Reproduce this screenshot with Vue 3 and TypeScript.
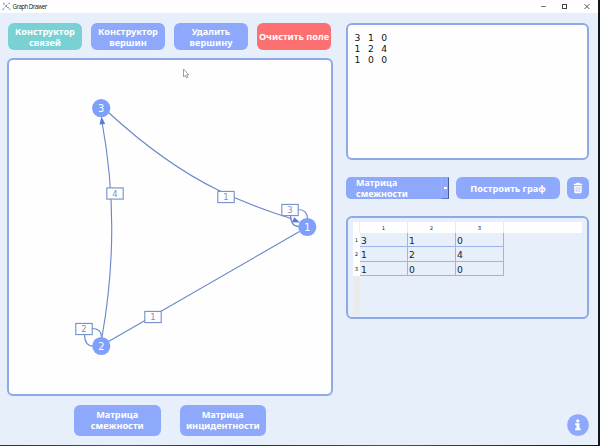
<script setup lang="ts">
import { ref } from 'vue'

interface ToolButton { lines: string[]; tone: string }
interface GraphNode { id: number; x: number; y: number }
interface Weight { value: number; x: number; y: number }

const tools: ToolButton[] = [
  { lines: ['Конструктор', 'связей'], tone: 'teal' },
  { lines: ['Конструктор', 'вершин'], tone: 'blue' },
  { lines: ['Удалить', 'вершину'], tone: 'blue' },
  { lines: ['Очистить поле'], tone: 'red' },
]

const matrix = ref<number[][]>([
  [3, 1, 0],
  [1, 2, 4],
  [1, 0, 0],
])

const nodes: GraphNode[] = [
  { id: 1, x: 307.3, y: 227 },
  { id: 2, x: 101.3, y: 346 },
  { id: 3, x: 101.2, y: 108.2 },
]

const weights: Weight[] = [
  { value: 4, x: 115, y: 193.5 },
  { value: 1, x: 226, y: 197 },
  { value: 3, x: 290, y: 210 },
  { value: 2, x: 84, y: 329 },
  { value: 1, x: 153, y: 317 },
]
</script>

<template>
  <div class="desktop">
    <div class="window">
      <header class="titlebar">
        <svg class="logo" width="9" height="9" viewBox="0 0 9 9">
          <path d="M1 1.5L4 4L7.5 1M4 4L1 7.5M4 4L5.5 5.5L8 7" stroke="#b4bcc6" stroke-width=".7" fill="none" />
          <g fill="#7590ad">
            <circle cx="1.8" cy="1.6" r=".8" /><circle cx="7.2" cy="1.3" r=".7" /><circle cx="4.2" cy="4" r=".9" />
            <circle cx="1.2" cy="7.3" r=".8" /><circle cx="6" cy="5.5" r=".8" /><circle cx="7.8" cy="7.3" r=".6" />
          </g>
        </svg>
        <span class="title">Graph Drawer</span>
        <svg class="controls" width="54" height="12" viewBox="0 0 54 12" fill="none" stroke="#444" stroke-width="1">
          <path d="M1 5.500H6" stroke="#777" />
          <rect x="22.500" y="3.500" width="4" height="4" />
          <path d="M44.500 3.200L49.300 8M49.300 3.200L44.500 8" stroke-width=".9" />
        </svg>
      </header>

      <main class="body">
        <section class="left">
          <div class="tools">
            <button v-for="(t, i) in tools" :key="i" class="btn" :class="t.tone">
              <span v-for="l in t.lines" :key="l">{{ l }}</span>
            </button>
          </div>
          <div class="canvas">
            <svg class="graph" width="322" height="334" viewBox="9 60 322 334">
              <g fill="none" stroke="#6c89cb" stroke-width="1.15">
                <path d="M102 337Q121.500 227 102 122" />
                <path d="M108.500 112.500C145 146 179 171 218 190S273 212 292 219" />
                <path d="M108.500 341.500L299.500 231.500" />
                <path d="M298 209.500C304 209.500 307.500 212 307.500 219M290.500 215C290.500 223 293 226.500 299 226.500" />
                <path d="M92 328.500C98 328.500 101.500 331 101.500 337M84.500 334C84.500 342 87 346 93 346" />
              </g>
              <path d="M101.500 116.500L105.200 124L99.500 124.500Z" fill="#5679e4" />
              <path d="M300 222.500L291.800 222.300L294.300 217.300Z" fill="#5679e4" />
              <g v-for="(w, i) in weights" :key="'w' + i">
                <rect :x="w.x - 8.2" :y="w.y - 5.6" width="16.400" height="11.200" fill="#fefefe" stroke="#748fcb" stroke-width="1.100" />
                <text :x="w.x" :y="w.y + 3.100" class="weight">{{ w.value }}</text>
              </g>
              <g v-for="n in nodes" :key="n.id">
                <circle :cx="n.x" :cy="n.y" r="9.100" fill="#7f9ffc" />
                <text :x="n.x" :y="n.y + 3.600" class="label">{{ n.id }}</text>
              </g>
              <path d="M183.500 69V77L185.200 75.300L186.600 78L187.800 77.400L186.600 74.800H188.800Z" fill="#fff" stroke="#929292" stroke-width=".9" />
            </svg>
          </div>
          <div class="exports">
            <button class="btn blue"><span>Матрица</span><span>смежности</span></button>
            <button class="btn blue"><span>Матрица</span><span>инцидентности</span></button>
          </div>
        </section>

        <section class="right">
          <div class="editor">
            <div v-for="(row, r) in matrix" :key="r" class="line">
              <span v-for="(v, c) in row" :key="c">{{ v }}</span>
            </div>
          </div>
          <div class="actions">
            <div class="combo">
              <div class="value"><span>Матрица</span><span>смежности</span></div>
              <div class="drop"><i></i></div>
            </div>
            <button class="btn blue build">Построить граф</button>
            <button class="btn blue trash">
              <svg width="10" height="12" viewBox="0 0 10 12">
                <path d="M.7 1.800H3L3.500.7H6.500L7 1.800H9.300V3H.7Z" fill="#fff" />
                <path d="M1.300 3.700H8.700V10Q8.700 11.200 7.500 11.200H2.500Q1.300 11.200 1.300 10Z" fill="#fff" />
                <path d="M3.200 4.700V9.900M5 4.700V9.900M6.800 4.700V9.900" stroke="#9db4f8" stroke-width=".7" />
              </svg>
            </button>
          </div>
          <div class="tablebox">
            <div class="grid">
              <div class="corner"></div>
              <div v-for="c in 3" :key="'h' + c" class="colhead">{{ c }}</div>
              <div class="headfill"></div>
              <template v-for="(row, r) in matrix" :key="r">
                <div class="rowhead">{{ r + 1 }}</div>
                <div v-for="(v, c) in row" :key="c" class="cell">{{ v }}</div>
                <div></div>
              </template>
              <div class="rowfill"></div>
            </div>
          </div>
          <div class="footer">
            <button class="info">
              <svg width="22" height="22" viewBox="0 0 22 22">
                <circle cx="11" cy="11" r="10.800" fill="#8ea8fb" />
                <circle cx="10.800" cy="6.900" r="1.600" fill="#fff" />
                <path d="M8.200 9.300H12.400V14.300H13.700V16.300H8.200V14.300H9.500V11.200H8.200Z" fill="#fff" />
              </svg>
            </button>
          </div>
        </section>
      </main>
    </div>
  </div>
</template>

<style>
body { margin: 0; overflow: hidden; }
</style>

<style scoped>
* { box-sizing: border-box; }
.desktop {
  width: 600px; height: 446px; padding: 0 2px 1px 0;
  background: linear-gradient(90deg, #29313c, #4b5560 20%, #252c38 40%, #4a535e 65%, #131b26 96%, #10151d);
  font-family: "Noto Sans", "DejaVu Sans", sans-serif;
}
.window { width: 598px; height: 445px; background: #e7effa; display: flex; flex-direction: column; }
.titlebar { height: 13px; flex: none; background: #fefefe; display: flex; align-items: center; padding-left: 2px; }
.title { font: 6.200px/12px "Open Sans", sans-serif; color: #222; margin-left: 1.500px; width: 50px; white-space: nowrap; letter-spacing: -.55px; }
.controls { margin-left: auto; margin-right: 4px; }
.body { flex: 1; display: flex; padding: 10px 9px 0 7px; gap: 13px; }
.left { width: 326px; display: flex; flex-direction: column; }
.tools { display: grid; grid-template-columns: repeat(4, 74px); gap: 9px; height: 27px; padding-left: 1px; }
.btn {
  border: 0; margin: 0; padding: 0; border-radius: 6px; color: #fff;
  font: 700 9.200px/11px "Noto Sans", "DejaVu Sans", sans-serif; white-space: nowrap;
  display: flex; flex-direction: column; align-items: center; justify-content: center;
}
.blue { background: #8ea8fb; }
.teal { background: #79d1d4; }
.red { background: #fc7072; }
.canvas { height: 338px; margin-top: 8px; border: 2px solid #8fa9e8; border-radius: 6px; background: #fefefe; overflow: hidden; }
.graph { display: block; }
.weight { font: 8.400px "DejaVu Sans", sans-serif; fill: #7c91c0; text-anchor: middle; }
.label { font: 9.800px "DejaVu Sans", sans-serif; fill: #fff; text-anchor: middle; }
.exports { display: flex; gap: 19px; margin: 9px 0 0 67px; }
.exports .btn { width: 86.500px; height: 30.500px; }
.right { width: 243px; display: flex; flex-direction: column; }
.editor { height: 137px; border: 2px solid #8fa9e8; border-radius: 6px; background: #fefefe; padding: 7px 6.500px; }
.line { display: flex; height: 11px; font: 9.200px/11px "DejaVu Sans", sans-serif; color: #111; }
.line span { width: 13.400px; }
.actions { display: flex; height: 22px; margin-top: 17px; gap: 7px; }
.combo { width: 103px; background: #8ea8fb; border-radius: 5px 0 0 5px; display: flex; }
.value { flex: 1; padding-left: 10px; display: flex; flex-direction: column; color: #fff; font: 700 9px/11px "Noto Sans", sans-serif; }
.drop { width: 8px; border: 1px solid #9fb3ee; border-right-color: #485b96; border-bottom-color: #6478b4; border-top-color: #8ea8fb; display: flex; align-items: center; justify-content: center; }
.drop i { width: 3px; height: 1.500px; background: #fff; }
.build { width: 104px; }
.trash { width: 22px; }
.tablebox { height: 103px; margin-top: 17px; border: 2px solid #8fa9e8; border-radius: 6px; padding: 4px 5px 3px; }
.grid { height: 94px; display: grid; grid-template-columns: 7px 48px 48px 48px 1fr; grid-template-rows: 11px 14.400px 14.400px 14.400px 1fr; font-family: "DejaVu Sans", sans-serif; color: #222; }
.corner, .rowhead, .colhead, .headfill { background: #fefefe; }
.corner { border-right: 1px solid #eee; }
.colhead { font-size: 5.300px; line-height: 12px; text-align: center; border-right: 1px solid #e9e9ea; }
.rowhead { font-size: 5.300px; line-height: 15px; text-align: center; }
.cell { border-right: 1px solid #9db3e9; border-bottom: 1px solid #9db3e9; font-size: 9.200px; line-height: 16px; padding-left: 1px; }
.rowfill { background: #ebebeb; }
.footer { display: flex; justify-content: flex-end; margin-top: 94.500px; }
.info { width: 22px; height: 22px; padding: 0; border: 0; background: none; display: flex; }
</style>
